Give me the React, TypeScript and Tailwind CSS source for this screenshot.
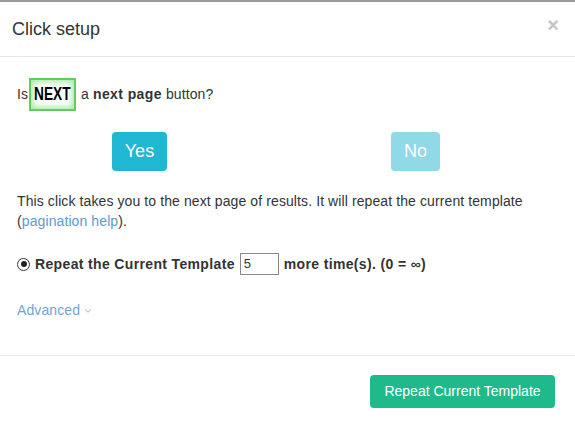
import { ChevronDown } from "lucide-react";

export default function App() {
  return (
    <div
      className="w-[575px] h-[428px] bg-white overflow-hidden border-t-2 border-[#9a9a9a] text-[#333]"
      style={{ fontFamily: '"Liberation Sans", Arial, sans-serif' }}
    >
      {/* Header */}
      <div className="flex items-center justify-between h-[55px] pl-[12px] pr-[16px] border-b border-[#e5e5e5]">
        <h4 className="text-[18px] leading-none">Click setup</h4>
        <span className="text-[20px] font-bold leading-none text-[#c4c4c4] -mt-[8px]">×</span>
      </div>

      {/* Body */}
      <div className="px-[17px] pt-[21px] h-[298px] tracking-[0.1px]">
        <div className="flex items-center text-[14px] h-[33px]">
          <span>Is</span>
          <span className="ml-[1px] mr-[5px] h-[33px] w-[47px] flex items-center justify-center border-2 border-[#5fcd5f] shadow-[inset_0_0_6px_2px_#a8e6a8] text-black font-bold text-[19px]">
            <span className="inline-block scale-x-[0.72] tracking-normal">NEXT</span>
          </span>
          <span>
            a <b className="tracking-[0.4px]">next page</b> button?
          </span>
        </div>

        <div className="grid grid-cols-[276px_276px] -ml-[15.5px] mt-[21px]">
          <div className="flex justify-center">
            <button className="h-[39px] w-[55px] rounded-[4px] bg-[#1fb7d2] text-white text-[18px]">Yes</button>
          </div>
          <div className="flex justify-center">
            <button className="h-[39px] w-[49px] rounded-[4px] bg-[#90dae7] text-white text-[18px]">No</button>
          </div>
        </div>

        <p className="mt-[20px] text-[14px] leading-[20px]">
          This click takes you to the next page of results. It will repeat the current template (<a className="text-[#5b9bd1]">pagination help</a>).
        </p>

        <div className="flex items-center mt-[22px] text-[14px] font-bold h-[22px] tracking-[0.35px]">
          <span className="w-[13px] h-[13px] rounded-full border-[1.5px] border-[#333] flex items-center justify-center mr-[5px]">
            <span className="w-[6px] h-[6px] rounded-full bg-[#222]" />
          </span>
          <span>Repeat the Current Template</span>
          <span className="ml-[5px] mr-[5px] w-[39px] h-[22px] border border-[#8a8a8a] text-[13px] font-normal pl-[3px] flex items-center tracking-normal">
            5
          </span>
          <span>more time(s). (0 = ∞)</span>
        </div>

        <div className="flex items-center mt-[25px] text-[14px] text-[#6fa6d6]">
          <span>Advanced</span>
          <ChevronDown size={10} strokeWidth={2} className="ml-[3px]" />
        </div>
      </div>

      {/* Footer */}
      <div className="border-t border-[#e5e5e5] flex justify-end pr-[20px] pt-[19px]">
        <button className="h-[33px] w-[185px] rounded-[4px] bg-[#1fba8c] text-white text-[14px]">
          Repeat Current Template
        </button>
      </div>
    </div>
  );
}
